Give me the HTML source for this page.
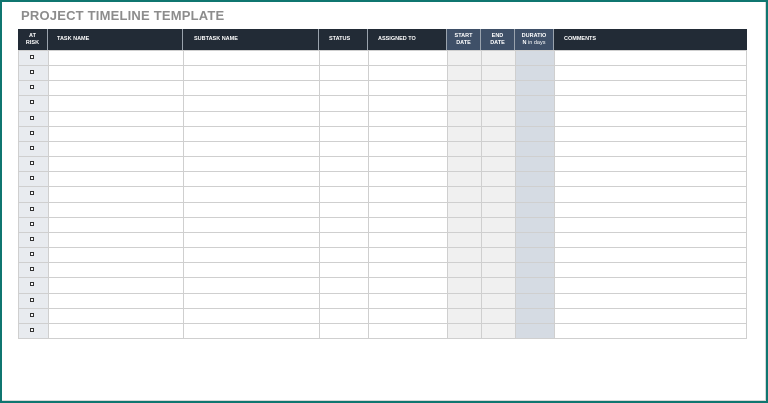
<!DOCTYPE html>
<html><head><style>
*{margin:0;padding:0;box-sizing:border-box}
body{width:768px;height:403px;background:#fff;position:relative;overflow:hidden;font-family:"Liberation Sans",sans-serif}
.frame{position:absolute;left:0;top:0;width:768px;height:403px;border:2px solid #0f7670;}
.inner{position:absolute;left:2px;top:2px;right:2px;bottom:2px;border-right:1px solid #d6d6d6;border-bottom:1px solid #d6d6d6}
.title{position:absolute;left:21px;top:8px;font-size:13px;font-weight:bold;color:#8c8c8c;letter-spacing:0.2px}
.c{position:absolute}
.h{position:absolute;top:29px;height:21px;color:#fff;font-size:5.5px;font-weight:bold;display:flex;align-items:center;line-height:7px;border-right:1px solid #9aa3ad;white-space:nowrap}
.row{position:absolute;left:18px;width:729px;height:1px;background:#cfcfcf}
.v{position:absolute;top:50px;height:288px;width:1px;background:#cfcfcf}
.cb{position:absolute;left:30px;width:4px;height:4px;border:1px solid #333;background:#fff}
</style></head><body>
<div class="frame"></div><div class="inner"></div>
<div class="title">PROJECT TIMELINE TEMPLATE</div>
<div class="c" style="left:18px;top:50px;width:30px;height:288px;background:#e8ebef"></div>
<div class="c" style="left:447px;top:50px;width:68px;height:288px;background:#f0f0f0"></div>
<div class="c" style="left:515px;top:50px;width:39px;height:288px;background:#d5dbe3"></div>
<div class="h" style="left:18px;width:30px;background:#222b36;justify-content:center;text-align:center"><span>AT<br>RISK</span></div>
<div class="h" style="left:48px;width:135px;background:#222b36;padding-left:9px"><span>TASK NAME</span></div>
<div class="h" style="left:183px;width:136px;background:#222b36;padding-left:11px"><span>SUBTASK NAME</span></div>
<div class="h" style="left:319px;width:49px;background:#222b36;padding-left:10px"><span>STATUS</span></div>
<div class="h" style="left:368px;width:79px;background:#222b36;padding-left:10px"><span>ASSIGNED TO</span></div>
<div class="h" style="left:447px;width:34px;background:#3f5068;justify-content:center;text-align:center"><span>START<br>DATE</span></div>
<div class="h" style="left:481px;width:34px;background:#3f5068;justify-content:center;text-align:center"><span>END<br>DATE</span></div>
<div class="h" style="left:515px;width:39px;background:#3f5068;justify-content:center;text-align:center"><span>DURATIO<br>N <span style="font-weight:normal">in days</span></span></div>
<div class="h" style="left:554px;width:193px;background:#222b36;padding-left:10px;border-right:none"><span>COMMENTS</span></div>
<div id="g"></div>
<script>
var g=document.getElementById('g'),s='';
for(var i=0;i<=19;i++){var y=Math.round(50+i*288/19);s+='<div class="row" style="top:'+y+'px"></div>';
if(i<19)s+='<div class="cb" style="top:'+(y+5)+'px"></div>';}
[18,48,183,319,368,447,481,515,554,746].forEach(function(x){s+='<div class="v" style="left:'+x+'px"></div>'});
g.innerHTML=s;
</script>
</body></html>
